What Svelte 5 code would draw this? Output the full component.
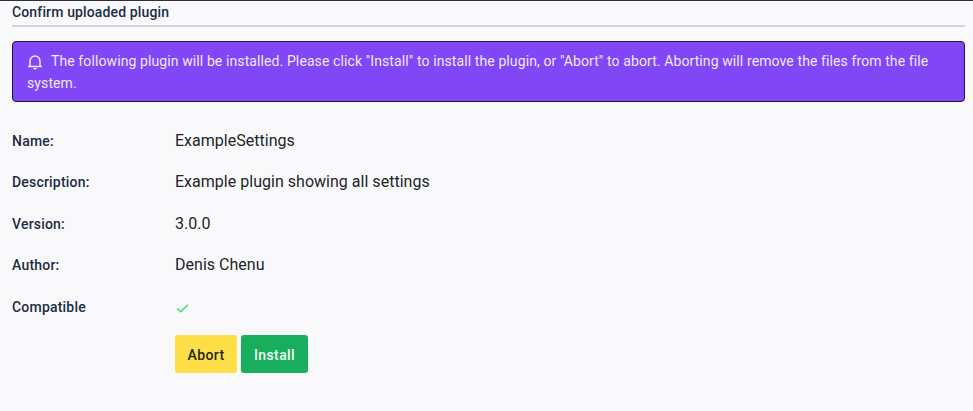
<script>
  const rows = [
    { label: 'Name:', value: 'ExampleSettings' },
    { label: 'Description:', value: 'Example plugin showing all settings' },
    { label: 'Version:', value: '3.0.0' },
    { label: 'Author:', value: 'Denis Chenu' }
  ];
</script>

<main>
  <h1><span>Confirm uploaded plugin</span></h1>

  <div class="alert" role="alert">
    <svg class="bell" viewBox="0 0 16 16" width="16" height="16" aria-hidden="true">
      <path d="M3 12.2V7a5 5 0 0 1 10 0v5.2M1 12.4h14" fill="none" stroke="currentColor" stroke-width="1.5" />
      <path d="M6 14h4v.7H9v.8H7v-.8H6z" fill="currentColor" />
    </svg><span>The following plugin will be installed. Please click "Install" to install the plugin, or "Abort" to abort. Aborting will remove the files from the file system.</span>
  </div>

  <dl>
    {#each rows as row}
      <dt><span>{row.label}</span></dt>
      <dd><span>{row.value}</span></dd>
    {/each}
    <dt><span>Compatible</span></dt>
    <dd>
      <svg class="check" viewBox="0 0 16 16" width="16" height="16" aria-label="Yes">
        <path d="M2.3 8.5 5.7 11.8 12.9 4.8" fill="none" stroke="currentColor" stroke-width="1.5" />
      </svg>
    </dd>
  </dl>

  <div class="actions">
    <button class="abort"><span>Abort</span></button>
    <button class="install"><span>Install</span></button>
  </div>
</main>

<style>
  :global(body) {
    background: #f9f9fc;
  }
  main {
    box-sizing: border-box;
    height: 411px;
    padding: 0 8px 0 12px;
    border-top: 1px solid #302e3f;
    color: #212529;
    font-family: Roboto, "Liberation Sans", sans-serif;
  }
  h1 {
    box-sizing: border-box;
    height: 26px;
    margin: 0 0 14px;
    border-bottom: 2px solid #d4d5dc;
    color: #1e2c43;
    font-size: 14px;
    font-weight: 500;
    letter-spacing: 0.14px;
    line-height: 22px;
  }
  .alert {
    box-sizing: border-box;
    height: 61px;
    padding: 8px 14px;
    border: 1px solid #1e1a37;
    border-radius: 4px;
    background: #8146f6;
    color: #f0e8fe;
    font-size: 14px;
    letter-spacing: 0.102px;
    line-height: 22px;
  }
  .bell {
    margin-right: 8px;
    vertical-align: -4px;
  }
  dl {
    display: grid;
    grid-template-columns: 163px 1fr;
    grid-template-rows: 41px 42px 41px 42px 41px;
    align-items: start;
    margin: 18px 0 0;
  }
  dt {
    padding-top: 10px;
    color: #1e2c43;
    font-size: 14px;
    font-weight: 500;
    letter-spacing: 0.2px;
    line-height: 22px;
  }
  dd {
    margin: 0;
    padding-top: 9px;
    font-size: 16px;
    letter-spacing: 0.02px;
    line-height: 24px;
  }
  .check {
    display: block;
    margin-top: 5px;
    color: #43d66b;
  }
  .actions {
    display: flex;
    gap: 4px;
    margin: 8px 0 0 163px;
  }
  button {
    height: 38px;
    padding: 2px 0 0;
    border: 0;
    border-radius: 3px;
    font: 500 14px/22px Roboto, "Liberation Sans", sans-serif;
    letter-spacing: 0.4px;
  }
  .abort {
    width: 62px;
    background: #ffdf47;
    color: #212529;
  }
  .install {
    width: 67px;
    background: #18ae5d;
    color: #f3fff8;
  }
</style>
